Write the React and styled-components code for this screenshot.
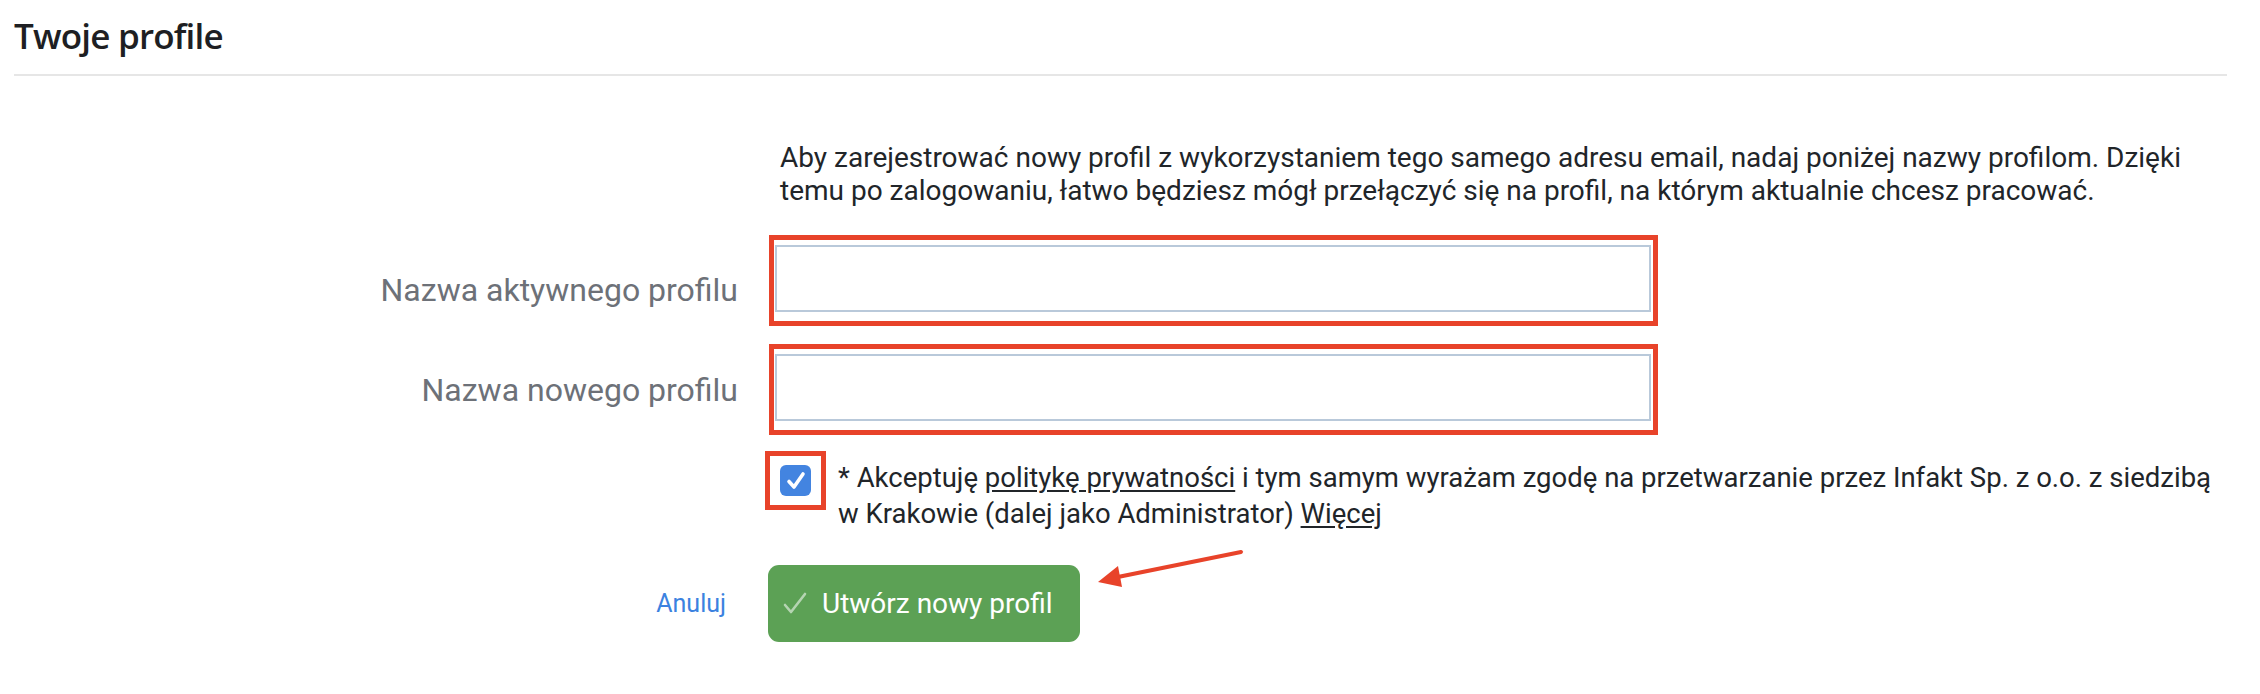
import React, { useState } from "react";
import styled, { createGlobalStyle } from "styled-components";

const GlobalStyle = createGlobalStyle`
  html, body {
    margin: 0;
    padding: 0;
    background: #ffffff;
  }
  body {
    font-family: Roboto, "Liberation Sans", Arial, sans-serif;
    color: #212529;
  }
`;

const Page = styled.div`
  position: relative;
  width: 2260px;
  height: 694px;
  padding: 0 33px 0 14px;
  box-sizing: border-box;
`;

const Header = styled.div`
  height: 74px;
  border-bottom: 2px solid #e6e6e6;
  display: flex;
  align-items: center;
`;

const Title = styled.h2`
  margin: 0;
  padding-bottom: 4px;
  font-family: "Open Sans", "Noto Sans", sans-serif;
  font-weight: 600;
  font-size: 35px;
  letter-spacing: -0.8px;
  color: #1e1f23;
`;

const Form = styled.div`
  display: grid;
  grid-template-columns: 724px 1fr;
  column-gap: 31px;
  padding-top: 65px;
`;

const Intro = styled.p`
  grid-column: 2;
  max-width: 1430px;
  margin: 0 0 28px 11px;
  font-size: 28px;
  line-height: 33px;
  color: #212529;
`;

const Label = styled.label`
  grid-column: 1;
  align-self: center;
  text-align: right;
  font-size: 32px;
  color: #6d7178;
`;

const Frame = styled.div`
  grid-column: 2;
  width: 889px;
  border: 5px solid #e8432a;
  padding: 5px 2px 9px 1px;
  margin-bottom: ${(p) => p.$mb || "0"};
  box-sizing: border-box;
`;

const Input = styled.input`
  display: block;
  width: 100%;
  height: 67px;
  border: 2px solid #b9c9da;
  box-sizing: border-box;
  font-size: 26px;
  padding: 0 12px;
  outline: none;
`;

const ConsentRow = styled.div`
  grid-column: 2;
  display: flex;
  align-items: flex-start;
  margin: 16px 0 0 -4px;
`;

const CheckFrame = styled.div`
  flex: none;
  width: 61px;
  height: 59px;
  border: 5px solid #e8432a;
  box-sizing: border-box;
  display: flex;
  align-items: center;
  justify-content: center;
`;

const CheckBox = styled.button`
  width: 31px;
  height: 31px;
  border: none;
  border-radius: 6px;
  background: ${(p) => (p.$on ? "#4384e0" : "#fff")};
  display: flex;
  align-items: center;
  justify-content: center;
  padding: 0;
  cursor: pointer;
`;

const ConsentText = styled.div`
  margin: 9px 0 0 12px;
  font-size: 27.5px;
  line-height: 36px;
  white-space: nowrap;
  color: #212529;

  a {
    color: #212529;
    text-decoration: underline;
    text-underline-offset: 3px;
  }
`;

const Actions = styled.div`
  grid-column: 1 / span 2;
  display: grid;
  grid-template-columns: 724px 1fr;
  column-gap: 30px;
  align-items: center;
  margin-top: 33px;
`;

const Cancel = styled.a`
  justify-self: end;
  margin-right: 12px;
  font-size: 25px;
  color: #3b82e0;
  text-decoration: none;
  cursor: pointer;
`;

const Submit = styled.button`
  justify-self: start;
  display: flex;
  align-items: center;
  gap: 14px;
  height: 77px;
  padding: 0 27px 0 14px;
  border: none;
  border-radius: 11px;
  background: #5ca155;
  color: #ffffff;
  font-family: Roboto, sans-serif;
  font-size: 28px;
  cursor: pointer;
`;

const Arrow = styled.svg`
  position: absolute;
  left: 1084px;
  top: 540px;
  overflow: visible;
`;

export default function App() {
  const [agree, setAgree] = useState(true);

  return (
    <>
      <GlobalStyle />
      <Page>
        <Header>
          <Title>Twoje profile</Title>
        </Header>
        <Form>
          <Intro>
            Aby zarejestrować nowy profil z wykorzystaniem tego samego adresu email, nadaj poniżej nazwy profilom. Dzięki
            temu po zalogowaniu, łatwo będziesz mógł przełączyć się na profil, na którym aktualnie chcesz pracować.
          </Intro>

          <Label>Nazwa aktywnego profilu</Label>
          <Frame $mb="18px">
            <Input />
          </Frame>

          <Label>Nazwa nowego profilu</Label>
          <Frame>
            <Input />
          </Frame>

          <ConsentRow>
            <CheckFrame>
              <CheckBox $on={agree} onClick={() => setAgree(!agree)}>
                {agree && (
                  <svg width="24" height="24" viewBox="0 0 24 24">
                    <path d="M5 12.5 L10 18 L19 5" fill="none" stroke="#fff" strokeWidth="3.6" strokeLinecap="round" strokeLinejoin="round" />
                  </svg>
                )}
              </CheckBox>
            </CheckFrame>
            <ConsentText>
              * Akceptuję <a>politykę prywatności</a> i tym samym wyrażam zgodę na przetwarzanie przez Infakt Sp. z o.o. z siedzibą
              <br />
              w Krakowie (dalej jako Administrator) <a>Więcej</a>
            </ConsentText>
          </ConsentRow>

          <Actions>
            <Cancel>Anuluj</Cancel>
            <Submit>
              <svg width="26" height="26" viewBox="0 0 26 26">
                <path d="M3 14 L9 21 L23 3" fill="none" stroke="rgba(255,255,255,0.55)" strokeWidth="2.6" strokeLinecap="round" strokeLinejoin="round" />
              </svg>
              Utwórz nowy profil
            </Submit>
          </Actions>
        </Form>

        <Arrow width="160" height="50" viewBox="0 0 160 50">
          <path d="M157 12 L24 39" stroke="#e8432a" strokeWidth="4" strokeLinecap="round" />
          <path d="M14 42 L34 26 L38 47 Z" fill="#e8432a" />
        </Arrow>
      </Page>
    </>
  );
}
